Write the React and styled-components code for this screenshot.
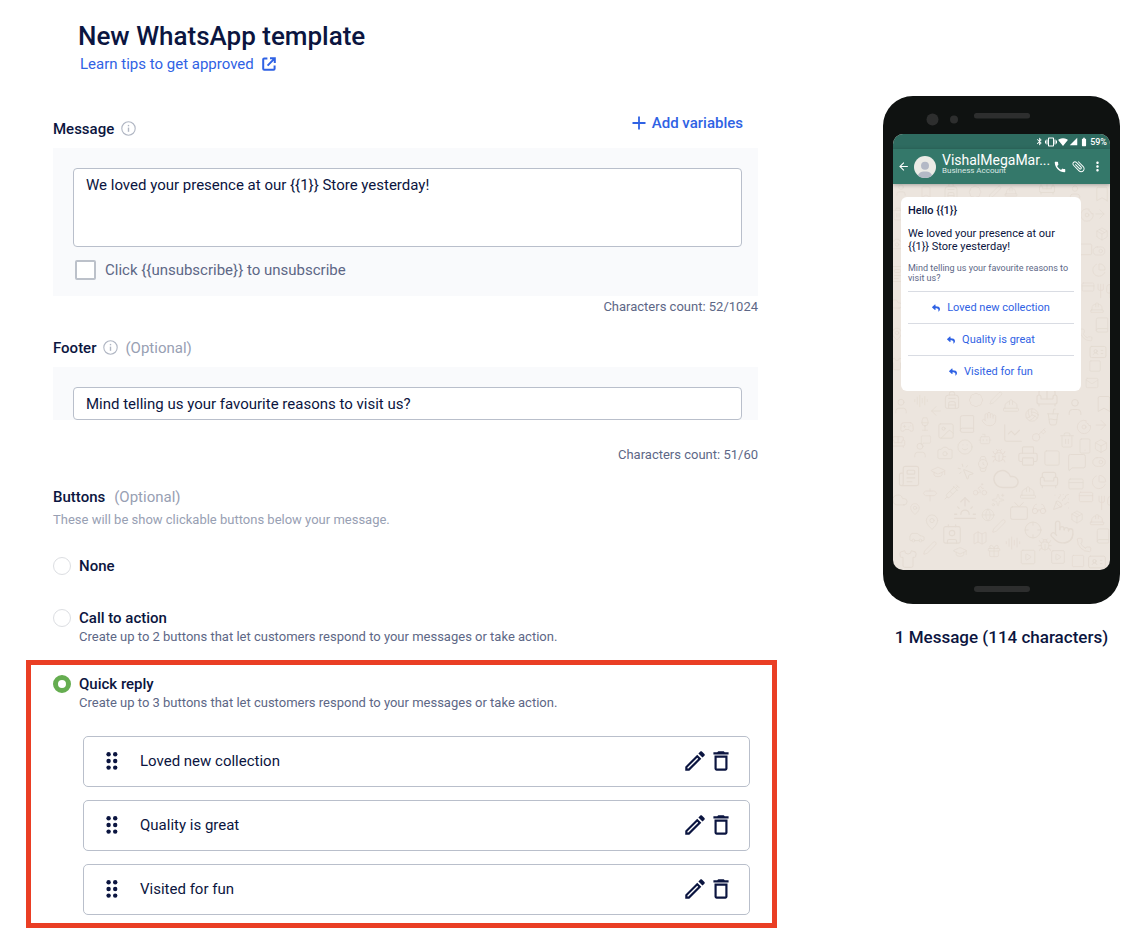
import React, { useState } from 'react';
import styled, { createGlobalStyle } from 'styled-components';
import {
  MdArrowBack,
  MdAttachFile,
  MdBatteryFull,
  MdBluetooth,
  MdCall,
  MdDeleteOutline,
  MdMoreVert,
  MdOutlineEdit,
  MdSignalCellular4Bar,
  MdSignalWifi4Bar,
  MdVibration,
} from 'react-icons/md';
import { FaReply } from 'react-icons/fa';
import {
  Armchair,
  ArrowLeft,
  ArrowRight,
  AudioLines,
  Backpack,
  Badge,
  Bike,
  Book,
  Bookmark,
  Bot,
  Box,
  Bug,
  Camera,
  Car,
  ChartLine,
  Cloud,
  Contact,
  CreditCard,
  Crosshair,
  CupSoda,
  Donut,
  Gamepad2,
  Gift,
  Glasses,
  Globe,
  GraduationCap,
  Hand,
  HardHat,
  IdCard,
  Image,
  Key,
  Mail,
  Map as MapIcon,
  MapPin,
  MessageSquare,
  MousePointerClick,
  Newspaper,
  Package,
  PartyPopper,
  Pen,
  Phone,
  PieChart,
  Pointer,
  Printer,
  Shirt,
  Signpost,
  Smartphone,
  Smile,
  Sofa,
  Sparkles,
  Square,
  SquarePlay,
  Sunrise,
  Syringe,
  ToggleRight,
  Trash2,
  Tv,
  User,
  Utensils,
  Volleyball,
  Watch,
  Wine,
} from 'lucide-react';

// icon, centre x, centre y, size
const DOODLES = [
  [User, 8, 6, 14], [Bookmark, 33, 8, 14], [Backpack, 58, 7, 18], [Badge, 82, 8, 14], [Pen, 102, 8, 14],
  [HardHat, 118, 8, 14], [Sofa, 154, 4, 18], [User, 182, 8, 16], [Bookmark, 209, 10, 18],
  [Donut, 194, 31, 15], [ArrowRight, 207, 30, 14], [Trash2, 5, 30, 14], [Package, 209, 50, 14],
  [MessageSquare, 192, 66, 16], [ToggleRight, 206, 67, 14], [Camera, 4, 60, 14], [PieChart, 206, 86, 15],
  [CreditCard, 195, 103, 14], [Utensils, 211, 107, 16], [Newspaper, 3, 90, 18], [HardHat, 204, 124, 15],
  [Book, 209, 141, 17], [Phone, 193, 151, 14], [Cloud, 3, 120, 14], [IdCard, 205, 168, 19],
  [Square, 202, 182, 14], [Mail, 199, 199, 14], [MapPin, 4, 150, 14], [Shirt, 4, 180, 14],
  [User, 8, 222, 18], [AudioLines, 28, 217, 15], [Backpack, 59, 216, 20], [Badge, 83, 216, 16],
  [Pen, 103, 214, 14], [HardHat, 118, 222, 18], [Sofa, 154, 214, 24], [User, 182, 223, 20],
  [Bookmark, 211, 220, 20], [ArrowLeft, 43, 227, 15], [Gamepad2, 14, 243, 15], [Wine, 32, 240, 15],
  [Image, 53, 247, 19], [Book, 74, 240, 20], [Hand, 96, 235, 16], [ChartLine, 120, 249, 22],
  [Key, 146, 251, 16], [Volleyball, 139, 231, 15], [CupSoda, 160, 233, 19], [Donut, 191, 243, 16],
  [ArrowRight, 208, 241, 16], [Sofa, 5, 258, 16], [User, 27, 266, 18], [MessageSquare, 33, 256, 11],
  [Camera, 52, 269, 17], [Smile, 72, 263, 17], [Bot, 92, 255, 14], [Watch, 90, 280, 18],
  [Bug, 106, 272, 16], [Printer, 135, 272, 22], [Trash2, 174, 256, 17], [Smartphone, 192, 262, 17],
  [Square, 159, 274, 19], [MessageSquare, 184, 278, 20], [ToggleRight, 206, 278, 15], [Box, 208, 262, 15],
  [Newspaper, 16, 292, 23], [GraduationCap, 45, 288, 16], [MousePointerClick, 73, 288, 19],
  [Cloud, 113, 295, 29], [Armchair, 156, 296, 23], [CreditCard, 183, 300, 17], [PieChart, 206, 298, 16],
  [Cloud, 7, 316, 17], [Signpost, 37, 311, 16], [Syringe, 59, 308, 17], [Bike, 87, 305, 16],
  [HardHat, 135, 309, 18], [CreditCard, 193, 313, 16], [Utensils, 212, 319, 16], [MapPin, 22, 325, 13],
  [MapPin, 39, 338, 17], [Sunrise, 72, 324, 25], [Globe, 95, 331, 14], [Sparkles, 105, 316, 14],
  [Tv, 126, 327, 20], [Glasses, 146, 325, 16], [PartyPopper, 168, 318, 18], [Package, 184, 333, 14],
  [HardHat, 204, 336, 16], [Car, 24, 353, 17], [Contact, 59, 350, 22], [MapIcon, 87, 354, 16],
  [Pen, 106, 342, 15], [Crosshair, 140, 346, 19], [Pointer, 169, 348, 26], [Book, 210, 352, 17],
  [Pen, 37, 364, 15], [AudioLines, 120, 359, 16], [Bug, 152, 361, 15], [Phone, 191, 361, 16],
  [Shirt, 15, 375, 20], [GraduationCap, 67, 368, 15], [Gift, 101, 367, 15], [SquarePlay, 135, 373, 18],
  [SquarePlay, 165, 373, 17], [Square, 185, 377, 15], [IdCard, 204, 378, 20],
];

const REPLIES = ['Loved new collection', 'Quality is great', 'Visited for fun'];

const InfoIcon = () => (
  <svg width="15" height="15" viewBox="0 0 15 15" fill="none" stroke="#b0b6c3" aria-hidden="true">
    <circle cx="7.5" cy="7.5" r="6.7" strokeWidth="1.1" />
    <path d="M7.5 6.6v4.2" strokeWidth="1.4" />
    <path d="M7.5 3.9v1.4" strokeWidth="1.4" />
  </svg>
);

const ExternalIcon = () => (
  <svg width="14" height="14" viewBox="0 0 14 14" fill="none" stroke="currentColor" strokeWidth="2" aria-hidden="true">
    <path d="M5.4 1.5H2.2a1 1 0 0 0-1 1v9.2a1 1 0 0 0 1 1h9.4a1 1 0 0 0 1-1V8.6" />
    <path d="M8 1.2h4.8V6M12.4 1.6L5.6 8.6" />
  </svg>
);

const DragIcon = () => (
  <svg width="12" height="18" viewBox="0 0 12 18" fill="currentColor" aria-hidden="true">
    {[2.3, 9, 15.6].map((y) => (
      <g key={y}>
        <circle cx="2.6" cy={y} r="2.2" />
        <circle cx="9.2" cy={y} r="2.2" />
      </g>
    ))}
  </svg>
);

const Wallpaper = () => (
  <WallpaperArt width="218" height="386" viewBox="0 0 218 386" aria-hidden="true">
    {DOODLES.map(([Icon, x, y, size], i) => (
      <Icon key={i} x={x - size / 2} y={y - size / 2} size={size} strokeWidth={1.2} />
    ))}
  </WallpaperArt>
);

const PhonePreview = ({ message, footer }) => (
  <Device>
    <Bezel>
      <svg width="105" height="14" viewBox="0 0 105 14" fill="#2d2e2e" aria-hidden="true">
        <circle cx="6.5" cy="7.5" r="6" />
        <circle cx="28" cy="7.5" r="4" />
        <rect x="48" y="1" width="56" height="5.5" rx="2.5" />
      </svg>
    </Bezel>
    <Screen>
      <StatusBar>
        <MdBluetooth size={9} />
        <MdVibration size={12} />
        <MdSignalWifi4Bar size={10} />
        <MdSignalCellular4Bar size={9} />
        <MdBatteryFull size={10} />
        <span>59%</span>
      </StatusBar>
      <ChatHeader>
        <MdArrowBack size={13} />
        <svg width="22" height="22" viewBox="0 0 22 22" aria-hidden="true">
          <clipPath id="avatar">
            <circle cx="11" cy="11" r="11" />
          </clipPath>
          <g clipPath="url(#avatar)">
            <rect width="22" height="22" fill="#ebebe6" />
            <circle cx="11" cy="9.8" r="4" fill="#b3b9c6" />
            <path d="M3.5 22c0-4.6 3-6.5 7.5-6.5s7.5 1.900 7.5 6.5z" fill="#b3b9c6" />
          </g>
        </svg>
        <ContactName>
          <strong>VishalMegaMar...</strong>
          <small>Business Account</small>
        </ContactName>
        <MdCall size={14} />
        <Clip size={15} />
        <MdMoreVert size={15} />
      </ChatHeader>
      <Chat>
        <Wallpaper />
        <Bubble>
          <BubbleTitle>Hello {'{{1}}'}</BubbleTitle>
          <BubbleText>{message}</BubbleText>
          <BubbleFooter>{footer}</BubbleFooter>
          {REPLIES.map((reply) => (
            <BubbleButton type="button" key={reply}>
              <FaReply size={8} />
              {reply}
            </BubbleButton>
          ))}
        </Bubble>
      </Chat>
    </Screen>
    <Chin />
  </Device>
);

const App = () => {
  const [message, setMessage] = useState(
    'We loved your presence at our {{1}} Store yesterday!'
  );
  const [footer, setFooter] = useState(
    'Mind telling us your favourite reasons to visit us?'
  );
  const [kind, setKind] = useState('quick');

  const radio = (value) => ({
    type: 'radio',
    name: 'buttons',
    id: value,
    checked: kind === value,
    onChange: () => setKind(value),
  });

  return (
    <Page>
      <GlobalStyle />
      <Form onSubmit={(e) => e.preventDefault()}>
        <Header>
          <h1>New WhatsApp template</h1>
          <a href="#tips">
            Learn tips to get approved
            <ExternalIcon />
          </a>
        </Header>

        <Section>
          <FieldHead>
            <FieldName>
              <label htmlFor="message">Message</label>
              <InfoIcon />
            </FieldName>
            <AddButton type="button">
              <svg width="14" height="14" viewBox="0 0 14 14" stroke="currentColor" strokeWidth="1.8" aria-hidden="true">
                <path d="M7 .5v13M.5 7h13" />
              </svg>
              Add variables
            </AddButton>
          </FieldHead>
          <Panel>
            <TextArea
              id="message"
              value={message}
              onChange={(e) => setMessage(e.target.value)}
            />
            <CheckLabel>
              <input type="checkbox" />
              Click {'{{unsubscribe}}'} to unsubscribe
            </CheckLabel>
          </Panel>
          <Count>Characters count: {message.length}/1024</Count>
        </Section>

        <Section>
          <FieldHead>
            <FieldName>
              <label htmlFor="footer">Footer</label>
              <InfoIcon />
              <Optional>(Optional)</Optional>
            </FieldName>
          </FieldHead>
          <Panel>
            <TextInput
              id="footer"
              type="text"
              value={footer}
              onChange={(e) => setFooter(e.target.value)}
            />
          </Panel>
          <Count $spaced>Characters count: {footer.length}/60</Count>
        </Section>

        <ButtonsHead>
          <h2>
            Buttons <Optional>(Optional)</Optional>
          </h2>
          <p>These will be show clickable buttons below your message.</p>
        </ButtonsHead>

        <Choice>
          <input {...radio('none')} />
          <div>
            <label htmlFor="none">None</label>
          </div>
        </Choice>
        <Choice>
          <input {...radio('call')} />
          <div>
            <label htmlFor="call">Call to action</label>
            <p>
              Create up to 2 buttons that let customers respond to your messages
              or take action.
            </p>
          </div>
        </Choice>

        <Highlight>
          <Choice $inset>
            <input {...radio('quick')} />
            <div>
              <label htmlFor="quick">Quick reply</label>
              <p>
                Create up to 3 buttons that let customers respond to your
                messages or take action.
              </p>
            </div>
          </Choice>
          <ReplyList>
            {REPLIES.map((reply) => (
              <li key={reply}>
                <DragIcon />
                <span>{reply}</span>
                <IconButton type="button" aria-label={`Edit ${reply}`}>
                  <MdOutlineEdit size={26} />
                </IconButton>
                <IconButton type="button" aria-label={`Delete ${reply}`}>
                  <MdDeleteOutline size={26} />
                </IconButton>
              </li>
            ))}
          </ReplyList>
        </Highlight>
      </Form>

      <Preview>
        <PhonePreview message={message} footer={footer} />
        <p>1 Message (114 characters)</p>
      </Preview>
    </Page>
  );
};

const GlobalStyle = createGlobalStyle`
  * {
    box-sizing: border-box;
  }
  body {
    margin: 0;
    background-color: #fff;
    color: #0b1540;
    font-family: Roboto, "Liberation Sans", sans-serif;
    font-size: 15px;
    line-height: 24px;
    -webkit-font-smoothing: antialiased;
  }
  h1, h2, p, ul {
    margin: 0;
    padding: 0;
  }
  button, input, textarea {
    font: inherit;
    color: inherit;
    margin: 0;
  }
  button {
    border: none;
    background: none;
    padding: 0;
    cursor: pointer;
  }
  svg {
    flex-shrink: 0;
  }
`;

const Page = styled.main`
  display: flex;
  align-items: flex-start;
  gap: 106px;
  padding: 20px 28px 16px 26px;
`;

const Form = styled.form`
  flex: 1;
  min-width: 0;
`;

const Header = styled.header`
  padding-left: 52px;
  margin-bottom: 35px;
  h1 {
    font-size: 26px;
    font-weight: 500;
    line-height: 32px;
  }
  a {
    display: inline-flex;
    align-items: center;
    gap: 8px;
    padding-left: 2px;
    color: #2f62e4;
    vertical-align: top;
    text-decoration: none;
  }
`;

const Section = styled.section`
  padding: 0 19px 0 27px;
`;

const FieldHead = styled.div`
  display: flex;
  justify-content: space-between;
  align-items: flex-end;
  height: 30px;
  margin-bottom: 7px;
`;

const FieldName = styled.div`
  display: flex;
  align-items: center;
  gap: 7px;
  label {
    font-weight: 500;
  }
  svg {
    margin-bottom: 2px;
  }
`;

const Optional = styled.span`
  color: #98a0b3;
  font-weight: 400;
`;

const AddButton = styled.button`
  display: flex;
  align-items: center;
  align-self: flex-start;
  gap: 6px;
  margin-right: 15px;
  color: #2f62e4;
  font-weight: 500;
`;

const Panel = styled.div`
  padding: 20px 16px 0 20px;
  background-color: #f9fafc;
`;

const TextArea = styled.textarea`
  display: block;
  width: 100%;
  height: 79px;
  padding: 4px 12px;
  border: 1px solid #b9bfcb;
  border-radius: 4px;
  background-color: #fff;
  resize: none;
`;

const TextInput = styled.input`
  display: block;
  width: 100%;
  height: 33px;
  padding: 0 12px;
  border: 1px solid #b9bfcb;
  border-radius: 4px;
  background-color: #fff;
`;

const CheckLabel = styled.label`
  display: flex;
  align-items: center;
  gap: 9px;
  padding: 11px 2px 14px;
  color: #5d6786;
  input {
    appearance: none;
    width: 21px;
    height: 20px;
    border: 2px solid #bcc1ca;
    border-radius: 2px;
    background-color: #fff;
  }
`;

const Count = styled.p`
  margin: ${({ $spaced }) => ($spaced ? '25px 0 20px' : '1px 0 13px')};
  color: #5d6786;
  font-size: 13px;
  line-height: 20px;
  text-align: right;
`;

const ButtonsHead = styled.div`
  padding-left: 27px;
  margin-bottom: 23px;
  h2 {
    display: flex;
    gap: 9px;
    font-size: 15px;
    font-weight: 500;
  }
  p {
    color: #98a0b3;
    font-size: 13px;
    line-height: 22px;
  }
`;

const Choice = styled.div`
  display: flex;
  gap: 8px;
  padding-left: ${({ $inset }) => ($inset ? '22px' : '27px')};
  margin-bottom: ${({ $inset }) => ($inset ? '26px' : '16px')};
  & + & {
    margin-top: 28px;
  }
  input {
    appearance: none;
    flex-shrink: 0;
    width: 18px;
    height: 18px;
    margin-top: 3px;
    border: 1px solid #dcdee2;
    border-radius: 50%;
    background-color: #fff;
  }
  input:checked {
    border: 5px solid #65ad50;
  }
  label {
    display: block;
    font-weight: 500;
  }
  p {
    color: #5d6786;
    font-size: 13px;
    line-height: 14px;
  }
`;

const Highlight = styled.div`
  padding: 7px 0 8px;
  border: 5px solid #ea3e24;
`;

const ReplyList = styled.ul`
  display: flex;
  flex-direction: column;
  gap: 13px;
  padding: 0 22px 0 52px;
  list-style: none;
  li {
    display: flex;
    align-items: center;
    height: 51px;
    padding: 0 15px 1px 22px;
    border: 1px solid #b9bfcb;
    border-radius: 5px;
  }
  span {
    flex: 1;
    padding-left: 22px;
  }
`;

const IconButton = styled.button`
  display: flex;
`;

const Preview = styled.aside`
  width: 237px;
  padding-top: 76px;
  > p {
    padding-top: 21px;
    font-size: 17px;
    font-weight: 500;
    text-align: center;
    white-space: nowrap;
  }
`;

const Device = styled.div`
  padding: 0 10px 12px;
  border-radius: 30px;
  background-color: #0f1211;
`;

const Bezel = styled.div`
  height: 38px;
  padding: 13px 33px 0;
`;

const Chin = styled.div`
  width: 56px;
  height: 6px;
  margin: 0 auto;
  border-radius: 3px;
  background-color: #2d2e2e;
`;

const Screen = styled.div`
  overflow: hidden;
  margin-bottom: 16px;
  border-radius: 10px;
  background-color: #ece5de;
`;

const StatusBar = styled.div`
  display: flex;
  justify-content: flex-end;
  align-items: center;
  gap: 1px;
  height: 15px;
  padding-right: 3px;
  background-color: #2e6b60;
  color: #fff;
  font-size: 9px;
  font-weight: 500;
`;

const ChatHeader = styled.div`
  position: relative;
  display: flex;
  align-items: center;
  gap: 4px;
  height: 35px;
  padding: 0 5px 0 4px;
  background-color: #34786a;
  box-shadow: 0 1px 4px rgba(0, 0, 0, 0.3);
  color: #fff;
  z-index: 1;
`;

const ContactName = styled.div`
  flex: 1;
  min-width: 0;
  padding: 0 0 5px 2px;
  strong {
    display: block;
    font-size: 14px;
    font-weight: 400;
    line-height: 14px;
    white-space: nowrap;
  }
  small {
    display: block;
    color: #dbe8e5;
    font-size: 8px;
    line-height: 8px;
  }
`;

const Clip = styled(MdAttachFile)`
  transform: rotate(-45deg);
`;

const Chat = styled.div`
  position: relative;
  height: 386px;
  padding: 13px 29px 0 8px;
`;

const WallpaperArt = styled.svg`
  position: absolute;
  top: 0;
  left: 0;
  color: #e4dbd2;
`;

const Bubble = styled.div`
  position: relative;
  padding: 7px 7px 4px;
  border-radius: 6px;
  background-color: #fff;
`;

const BubbleTitle = styled.p`
  margin-bottom: 10px;
  font-size: 11px;
  font-weight: 500;
  line-height: 13px;
`;

const BubbleText = styled.p`
  margin-bottom: 10px;
  font-size: 11px;
  line-height: 13px;
`;

const BubbleFooter = styled.p`
  margin-bottom: 8px;
  color: #5d6786;
  font-size: 9px;
  line-height: 10px;
`;

const BubbleButton = styled.button`
  display: flex;
  justify-content: center;
  align-items: center;
  gap: 7px;
  width: 100%;
  height: 32px;
  border-top: 1px solid #d9dce3;
  color: #2f62e4;
  font-size: 11px;
`;

export default App;
